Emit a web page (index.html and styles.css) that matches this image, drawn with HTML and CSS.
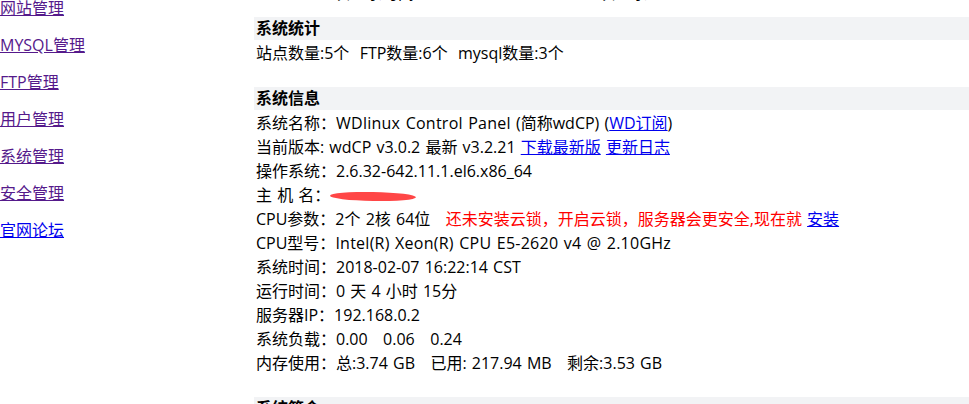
FILE: index.html
```html
<!DOCTYPE html>
<html lang="zh-CN">
<head>
    <meta charset="UTF-8">
    <meta name="viewport" content="width=device-width, initial-scale=1.0">
    <title>wdCP 管理面板</title>
    <link rel="stylesheet" href="styles.css">
</head>
<body>

<div class="page">
    <div class="sidebar">
        <a class="visited" href="#">网站管理</a>
        <a class="visited" href="#">MYSQL管理</a>
        <a class="visited" href="#">FTP管理</a>
        <a class="visited" href="#">用户管理</a>
        <a class="visited" href="#">系统管理</a>
        <a class="visited" href="#">安全管理</a>
        <a href="#">官网论坛</a>
    </div>

    <div class="main">
        <div class="top-row">
            <span class="top-left">上次登录时间</span>
            <span class="top-right">上次登录</span>
        </div>

        <div class="section">
            <div class="section-title">系统统计</div>
            <div class="row">站点数量:5个&nbsp;&nbsp;FTP数量:6个&nbsp;&nbsp;mysql数量:3个</div>
        </div>

        <div class="section">
            <div class="section-title">系统信息</div>
            <div class="row">系统名称：<span class="en">WDlinux Control Panel</span> (简称wdCP) (<a href="#">WD订阅</a>)</div>
            <div class="row">当前版本: wdCP v3.0.2 最新 v3.2.21 <a href="#">下载最新版</a> <a href="#">更新日志</a></div>
            <div class="row">操作系统：2.6.32-642.11.1.el6.x86_64</div>
            <div class="row">主 机 名：<span class="scribble"></span></div>
            <div class="row">CPU参数：2个 2核 64位 &nbsp; <span class="warn">还未安装云锁，开启云锁，服务器会更安全,现在就</span> <a href="#">安装</a></div>
            <div class="row">CPU型号：<span class="en">Intel(R) Xeon(R) CPU E5-2620 v4 @ 2.10GHz</span></div>
            <div class="row">系统时间：2018-02-07 16:22:14 CST</div>
            <div class="row">运行时间：0 天 4 小时 15分</div>
            <div class="row">服务器IP：192.168.0.2</div>
            <div class="row">系统负载：0.00 &nbsp; 0.06 &nbsp; 0.24</div>
            <div class="row">内存使用：总:3.74 GB &nbsp; 已用: 217.94 MB &nbsp; 剩余:3.53 GB</div>
        </div>

        <div class="section">
            <div class="section-title">系统简介</div>
        </div>
    </div>
</div>

</body>
</html>
```

FILE: styles.css
```css
body {
    margin: 0;
    font-family: 'Open Sans', 'Noto Sans CJK SC', sans-serif;
    font-size: 16px;
    word-spacing: 1px;
    color: #000;
    background: #fff;
    overflow: hidden;
}

a {
    color: #0000ee;
}

a.visited {
    color: #551a8b;
}

.page {
    display: flex;
    margin-top: -10px;
}

.sidebar {
    width: 254px;
    flex-shrink: 0;
}

.sidebar a {
    display: block;
    line-height: 37px;
    white-space: nowrap;
}

.main {
    flex: 1;
    margin-top: -9px;
}

.top-row {
    line-height: 24px;
    height: 24px;
    margin-bottom: 12px;
}

.top-left {
    margin-left: 64px;
}

.top-right {
    margin-left: 164px;
}

.section {
    margin-bottom: 23px;
}

.section-title {
    background: #f2f3f5;
    height: 23px;
    line-height: 23px;
    font-weight: bold;
    padding-left: 2px;
}

.row {
    line-height: 24px;
    padding-top: 1px;
    margin-bottom: -1px;
    padding-left: 2px;
    white-space: nowrap;
}

.en {
    letter-spacing: 0.25px;
}

.warn {
    color: #ff0000;
}

.scribble {
    display: inline-block;
    width: 86px;
    height: 9px;
    background: #ff3c3c;
    border-radius: 50%;
    vertical-align: middle;
    transform: rotate(1deg);
    opacity: 0.95;
}
```
